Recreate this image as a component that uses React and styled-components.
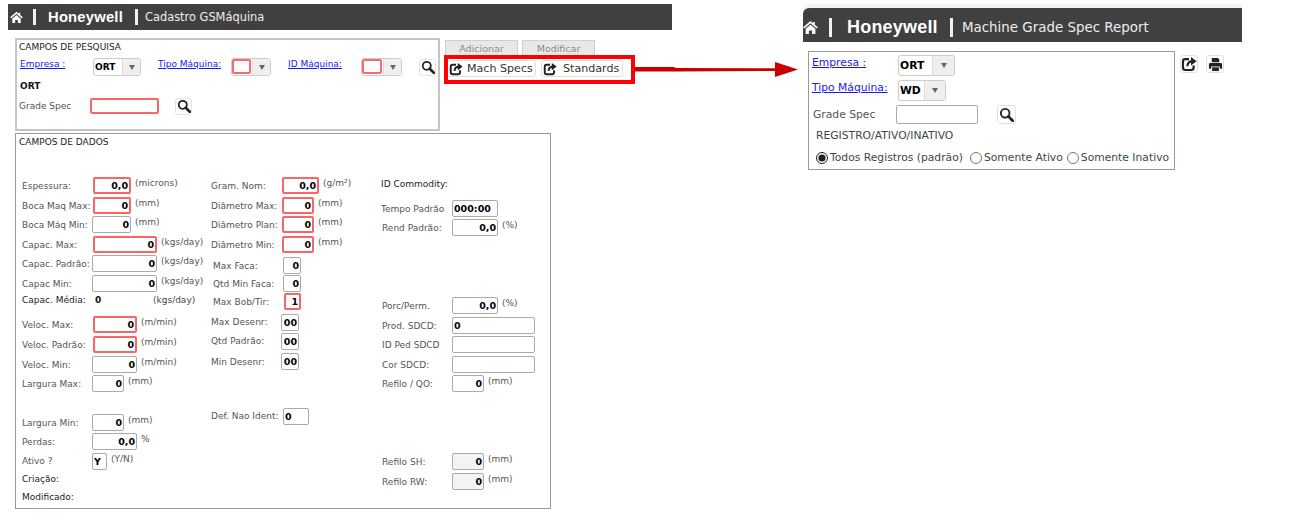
import React from "react";
import styled, { createGlobalStyle } from "styled-components";

const GlobalStyle = createGlobalStyle`
  html, body { margin: 0; padding: 0; background: #fff; }
  body { font-family: "DejaVu Sans", sans-serif; font-size: 9px; color: #444; }
`;

const Page = styled.div`
  position: relative;
  width: 1297px;
  height: 522px;
  overflow: hidden;
  display: flex;
  align-items: flex-start;
`;

const LeftScreen = styled.div`
  width: 672px;
  padding: 4px 0 0 8px;
  box-sizing: border-box;
`;

const RightScreen = styled.div`
  width: 439px;
  margin-left: 131px;
  padding-top: 8px;
  font-size: 10.75px;
`;

const Header = styled.div`
  display: flex;
  align-items: center;
  height: ${(p) => (p.$big ? 34 : 26)}px;
  box-sizing: border-box;
  background: #404040;
  color: #fff;
  padding: ${(p) => (p.$big ? "4px 0 0 0" : "0 0 0 2px")};
  border-top-left-radius: ${(p) => (p.$big ? 6 : 0)}px;
  box-shadow: ${(p) => (p.$big ? "0 -4px 0 #f3f3f3" : "none")};
`;

const Sep = styled.span`
  width: 3px;
  height: ${(p) => (p.$big ? 19 : 16)}px;
  background: #eef3f8;
  flex: none;
  margin-left: ${(p) => p.$ml}px;
  margin-right: ${(p) => p.$mr}px;
`;

const Brand = styled.span`
  font-family: "Liberation Sans", sans-serif;
  font-weight: 700;
  font-size: ${(p) => (p.$big ? 18 : 14.8)}px;
  letter-spacing: 0.2px;
  width: ${(p) => (p.$big ? 103 : 87)}px;
  white-space: nowrap;
`;

const HeaderTitle = styled.span`
  font-size: ${(p) => (p.$big ? 13.4 : 11.4)}px;
  color: #eee;
  white-space: nowrap;
`;

const Body = styled.div`
  display: flex;
  margin: 8px 0 0 7px;
`;

const SearchPanel = styled.div`
  width: 425px;
  height: 93px;
  box-sizing: border-box;
  border: 2px solid #c4c4c4;
  padding: 2px 2px;
  color: #222;
`;

const PanelTitle = styled.div`
  line-height: 11px;
  color: #222;
`;

const SearchRow = styled.div`
  display: flex;
  align-items: center;
  height: 18px;
  margin-top: ${(p) => p.$mt || 0}px;
  padding-left: ${(p) => p.$pl || 0}px;
`;

const FieldLink = styled.a`
  color: #1a1aee;
  text-decoration: underline;
  width: ${(p) => p.$w}px;
  flex: none;
  align-self: flex-start;
  white-space: nowrap;
  line-height: 13px;
  margin-top: ${(p) => p.$mt || 0}px;
`;

const SelectBox = styled.div`
  display: flex;
  width: ${(p) => p.$w}px;
  height: ${(p) => p.$h || 18}px;
  flex: none;
  box-sizing: border-box;
  border: 1px solid #ccc;
  border-radius: 3px;
  background: #fff;
  color: #000;
  font-weight: 700;
  line-height: ${(p) => (p.$h || 18) - 2}px;
  margin-right: ${(p) => p.$mr || 0}px;
`;

const SelectValue = styled.span`
  flex: 1;
  padding-left: 1px;
`;

const RedEmpty = styled.span`
  flex: 1;
  margin: 0 1px 1px 0;
  border: 2px solid #fa6a6a;
  border-radius: 2px;
`;

const SelectArrow = styled.span`
  width: ${(p) => p.$w || 17}px;
  flex: none;
  display: flex;
  align-items: center;
  justify-content: center;
  background: #efefef;
  border-left: 1px solid #ddd;
  border-radius: 0 2px 2px 0;
  &::after {
    content: "";
    border-left: 3px solid transparent;
    border-right: 3px solid transparent;
    border-top: 5px solid #666;
  }
`;

const OrtLine = styled.div`
  font-weight: 700;
  color: #111;
  margin: 5px 0 0 1px;
  line-height: 11px;
`;

const IconButton = styled.button`
  display: flex;
  align-items: center;
  justify-content: center;
  width: ${(p) => p.$s || 17}px;
  height: ${(p) => p.$s || 17}px;
  padding: 0;
  background: #fff;
  border: 1px solid #e2e2e2;
  border-radius: 3px;
  color: #222;
  flex: none;
  margin-left: ${(p) => p.$ml || 0}px;
`;

const Actions = styled.div`
  margin-left: 5px;
  padding-top: 2px;
`;

const Tabs = styled.div`
  display: flex;
  gap: 4px;
`;

const Tab = styled.div`
  width: 73px;
  height: 15px;
  box-sizing: border-box;
  background: #e8e8e8;
  border: 1px solid #d0d0d0;
  border-bottom: none;
  color: #888;
  font-size: 9.5px;
  line-height: 15px;
  text-align: center;
`;

const ButtonsRow = styled.div`
  display: flex;
  gap: 5px;
  margin: 5px 0 0 2px;
`;

const LinkButton = styled.button`
  display: flex;
  align-items: center;
  width: ${(p) => p.$w}px;
  height: 17px;
  padding: 0 0 0 1px;
  background: #fff;
  border: 1px solid #e0e0e0;
  border-radius: 3px;
  color: #333;
  font: 11.1px "DejaVu Sans", sans-serif;
  white-space: nowrap;
  span { margin-left: ${(p) => p.$gap}px; }
`;

const DataPanel = styled.div`
  width: 536px;
  height: 376px;
  margin: 2px 0 0 7px;
  box-sizing: border-box;
  border: 1px solid #999;
  padding: 3px 0 0 3px;
`;

const Columns = styled.div`
  display: grid;
  grid-template-columns: 189px 170px 1fr;
  margin: 29px 0 0 3px;
`;

const Column = styled.div`
  display: flex;
  flex-direction: column;
`;

const Field = styled.div`
  display: flex;
  align-items: center;
  height: 16px;
  margin-top: ${(p) => p.$mt || 0}px;
  white-space: nowrap;
`;

const Label = styled.span`
  width: ${(p) => p.$w || 71}px;
  padding-left: ${(p) => p.$pl || 0}px;
  margin-top: ${(p) => (p.$flat ? 0 : 2)}px;
  box-sizing: border-box;
  flex: none;
  color: ${(p) => (p.$dark ? "#222" : "#555")};
`;

const Input = styled.input`
  width: ${(p) => p.$w}px;
  height: ${(p) => p.$h || 17}px;
  box-sizing: border-box;
  flex: none;
  padding: 0 1px;
  border: ${(p) => (p.$red ? "2px solid #fa6565" : "1px solid #aaa")};
  border-radius: 2px;
  background: ${(p) => (p.$off ? "#f3f3f3" : "#fff")};
  color: #000;
  font: 700 9.5px "DejaVu Sans", sans-serif;
  text-align: ${(p) => p.$align || "right"};
  outline: none;
`;

const Unit = styled.span`
  margin: -5px 0 0 4px;
  color: #555;
`;

const StaticValue = styled.span`
  width: 60px;
  flex: none;
  font-weight: 700;
  color: #111;
  padding-left: 2px;
  box-sizing: border-box;
`;

const ReportPanel = styled.div`
  width: 367px;
  height: 119px;
  margin: 9px 0 0 5px;
  box-sizing: border-box;
  border: 1px solid #999;
  padding: 3px 0 0 3px;
  color: #444;
`;

const ReportWrap = styled.div`
  display: flex;
  align-items: flex-start;
`;

const ReportTools = styled.div`
  display: flex;
  gap: 8px;
  margin: 13px 0 0 5px;
`;

const ReportRow = styled.div`
  display: flex;
  align-items: center;
  margin: ${(p) => p.$mt || 0}px 0 0 ${(p) => p.$ml || 0}px;
`;

const ReportInput = styled.input`
  width: 82px;
  height: 19px;
  box-sizing: border-box;
  border: 1px solid #aaa;
  border-radius: 2px;
  background: #fff;
  outline: none;
`;

const RadioText = styled.label`
  display: flex;
  align-items: center;
  color: #444;
  margin-right: ${(p) => p.$mr || 0}px;
  white-space: nowrap;
`;

const Radio = styled.input`
  width: 12px;
  height: 12px;
  margin: 2px 2px 0 0;
  accent-color: #222;
`;

const Callout = styled.div`
  position: absolute;
  left: 444px;
  top: 55px;
  width: 191px;
  height: 29px;
  box-sizing: border-box;
  border: 4px solid #f00;
`;

const ArrowSvg = styled.svg`
  position: absolute;
  left: 634px;
  top: 60px;
`;

const HomeIcon = ({ size }) => (
  <svg width={size} height={size} viewBox="0 0 16 16" fill="#fff">
    <path d="M8 1L.2 7.8l1.1 1.3L8 3.4l6.7 5.7 1.1-1.3-3.2-2.8V2.2h-2.2v1.2z" />
    <path d="M2.8 9.4L8 5l5.2 4.4v5.4H9.7v-3.6H6.3v3.6H2.8z" />
  </svg>
);

const SearchIcon = ({ size = 13 }) => (
  <svg width={size} height={size} viewBox="0 0 16 16" fill="none" stroke="#222">
    <circle cx="6.6" cy="6.6" r="4.6" strokeWidth="2" />
    <path d="M10 10l4.6 4.6" strokeWidth="3" strokeLinecap="round" />
  </svg>
);

const ShareIcon = ({ size = 14 }) => (
  <svg width={size} height={size} viewBox="0 0 16 16" fill="none" stroke="#222">
    <path d="M8 3.2H4.2Q2 3.2 2 5.4v6.2Q2 14 4.2 14h6.2q2.2 0 2.2-2.2V9.4" strokeWidth="2.2" />
    <path d="M6.4 10.2C6.6 7 8.6 5.4 11 5.4" strokeWidth="2.2" />
    <path d="M10 1l5.6 4.2L10 9.6z" fill="#222" stroke="none" />
  </svg>
);

const PrintIcon = ({ size = 16 }) => (
  <svg width={size} height={size} viewBox="0 0 16 16" fill="#222">
    <path d="M4 1h6.5L12 2.5V5.6H4z" />
    <path d="M2.4 6.5h11.2Q15 6.5 15 8v4.4h-2.4V10H3.4v2.4H1V8q0-1.5 1.4-1.5z" />
    <path d="M4.4 11h7.2v4H4.4z" />
  </svg>
);

const col1 = [
  { label: "Espessura:", w: 38, value: "0,0", red: true, unit: "(microns)" },
  { mt: 4, label: "Boca Maq Max:", w: 38, value: "0", red: true, unit: "(mm)" },
  { mt: 3, label: "Boca Máq Min:", lw: 70, w: 39, value: "0", unit: "(mm)" },
  { mt: 4, label: "Capac. Max:", w: 64, value: "0", red: true, unit: "(kgs/day)" },
  { mt: 3, label: "Capac. Padrão:", lw: 70, w: 65, value: "0", unit: "(kgs/day)" },
  { mt: 4, label: "Capac Min:", lw: 70, w: 65, value: "0", unit: "(kgs/day)" },
  { mt: 1, static: true, label: "Capac. Média:", value: "0", unit: "(kgs/day)" },
  { mt: 8, label: "Veloc. Max:", w: 44, value: "0", red: true, unit: "(m/min)" },
  { mt: 4, label: "Veloc. Padrão:", w: 44, value: "0", red: true, unit: "(m/min)" },
  { mt: 4, label: "Veloc. Min:", lw: 70, w: 45, value: "0", unit: "(m/min)" },
  { mt: 3, label: "Largura Max:", lw: 70, w: 32, value: "0", unit: "(mm)" },
  { mt: 23, label: "Largura Min:", lw: 70, w: 32, value: "0", unit: "(mm)" },
  { mt: 3, label: "Perdas:", lw: 70, w: 45, value: "0,0", unit: "%" },
  { mt: 4, label: "Ativo ?", flat: true, lw: 70, w: 15, value: "Y", align: "left", unit: "(Y/N)" },
  { mt: 2, label: "Criação:", dark: true },
  { mt: 2, label: "Modificado:", dark: true },
];

const col2 = [
  { label: "Gram. Nom:", w: 37, value: "0,0", red: true, unit: "(g/m²)" },
  { mt: 4, label: "Diâmetro Max:", w: 32, value: "0", red: true, unit: "(mm)" },
  { mt: 3, label: "Diâmetro Plan:", w: 32, value: "0", red: true, unit: "(mm)" },
  { mt: 4, label: "Diâmetro Min:", w: 32, value: "0", red: true, unit: "(mm)" },
  { mt: 5, label: "Max Faca:", pl: 2, lw: 72, w: 18, value: "0" },
  { mt: 2, label: "Qtd Min Faca:", pl: 2, lw: 72, w: 18, value: "0" },
  { mt: 2, label: "Max Bob/Tir:", pl: 2, lw: 73, w: 17, value: "1", red: true },
  { mt: 5, label: "Max Desenr:", flat: true, lw: 70, w: 18, value: "00" },
  { mt: 3, label: "Qtd Padrão:", flat: true, lw: 70, w: 18, value: "00" },
  { mt: 4, label: "Min Desenr:", lw: 70, w: 18, value: "00" },
  { mt: 39, label: "Def. Nao Ident:", flat: true, lw: 72, w: 26, value: "0", align: "left" },
];

const col3 = [
  { mt: -1, label: "ID Commodity:", dark: true, lw: 100 },
  { mt: 8, label: "Tempo Padrão", w: 46, value: "000:00", align: "left" },
  { mt: 3, label: "Rend Padrão:", pl: 1, w: 46, value: "0,0", unit: "(%)" },
  { mt: 62, label: "Porc/Perm.", pl: 1, w: 46, value: "0,0", unit: "(%)" },
  { mt: 4, label: "Prod. SDCD:", pl: 1, w: 83, value: "0", align: "left" },
  { mt: 3, label: "ID Ped SDCD", pl: 1, w: 83, value: "" },
  { mt: 4, label: "Cor SDCD:", pl: 1, w: 83, value: "" },
  { mt: 3, label: "Refilo / QO:", pl: 1, w: 32, value: "0", unit: "(mm)" },
  { mt: 62, label: "Refilo SH:", pl: 1, w: 32, value: "0", off: true, unit: "(mm)" },
  { mt: 4, label: "Refilo RW:", pl: 1, w: 32, value: "0", off: true, unit: "(mm)" },
];

const renderField = (f) => (
  <Field key={f.label} $mt={f.mt}>
    <Label
      $w={f.lw}
      $pl={f.pl}
      $dark={f.dark || f.static}
      $flat={f.flat || f.dark || f.static}
    >
      {f.label}
    </Label>
    {f.static && <StaticValue>{f.value}</StaticValue>}
    {f.w && (
      <Input
        readOnly
        value={f.value}
        $w={f.w}
        $red={f.red}
        $off={f.off}
        $align={f.align}
      />
    )}
    {f.unit && (f.static ? <span>{f.unit}</span> : <Unit>{f.unit}</Unit>)}
  </Field>
);

const App = () => (
  <Page>
    <GlobalStyle />
    <LeftScreen>
      <Header>
        <HomeIcon size={13} />
        <Sep $ml={10} $mr={12} />
        <Brand>Honeywell</Brand>
        <Sep $ml={0} $mr={7} />
        <HeaderTitle>Cadastro GSMáquina</HeaderTitle>
      </Header>
      <Body>
        <SearchPanel>
          <PanelTitle>CAMPOS DE PESQUISA</PanelTitle>
          <SearchRow $mt={5} $pl={1}>
            <FieldLink $w={73}>Empresa :</FieldLink>
            <SelectBox $w={48} $mr={17}>
              <SelectValue>ORT</SelectValue>
              <SelectArrow />
            </SelectBox>
            <FieldLink $w={73}>Tipo Máquina:</FieldLink>
            <SelectBox $w={40} $mr={17}>
              <RedEmpty />
              <SelectArrow />
            </SelectBox>
            <FieldLink $w={73}>ID Máquina:</FieldLink>
            <SelectBox $w={41}>
              <RedEmpty />
              <SelectArrow />
            </SelectBox>
            <IconButton $ml={17}>
              <SearchIcon size={14} />
            </IconButton>
          </SearchRow>
          <OrtLine>ORT</OrtLine>
          <SearchRow $mt={5}>
            <Label $w={71} $flat>Grade Spec</Label>
            <Input $w={69} $h={16} $red readOnly value="" />
            <IconButton $ml={16}>
              <SearchIcon size={14} />
            </IconButton>
          </SearchRow>
        </SearchPanel>
        <Actions>
          <Tabs>
            <Tab>Adicionar</Tab>
            <Tab>Modificar</Tab>
          </Tabs>
          <ButtonsRow>
            <LinkButton $w={89} $gap={4}>
              <ShareIcon />
              <span>Mach Specs</span>
            </LinkButton>
            <LinkButton $w={82} $gap={6}>
              <ShareIcon />
              <span>Standards</span>
            </LinkButton>
          </ButtonsRow>
        </Actions>
      </Body>
      <DataPanel>
        <PanelTitle>CAMPOS DE DADOS</PanelTitle>
        <Columns>
          <Column>{col1.map(renderField)}</Column>
          <Column>{col2.map(renderField)}</Column>
          <Column>{col3.map(renderField)}</Column>
        </Columns>
      </DataPanel>
    </LeftScreen>
    <RightScreen>
      <Header $big>
        <HomeIcon size={15} />
        <Sep $big $ml={11} $mr={15} />
        <Brand $big>Honeywell</Brand>
        <Sep $big $ml={0} $mr={9} />
        <HeaderTitle $big>Machine Grade Spec Report</HeaderTitle>
      </Header>
      <ReportWrap>
        <ReportPanel>
          <ReportRow>
            <FieldLink $w={86} $mt={1}>Empresa :</FieldLink>
            <SelectBox $w={57} $h={21}>
              <SelectValue>ORT</SelectValue>
              <SelectArrow $w={21} />
            </SelectBox>
          </ReportRow>
          <ReportRow $mt={4}>
            <FieldLink $w={86} $mt={1}>Tipo Máquina:</FieldLink>
            <SelectBox $w={48} $h={21}>
              <SelectValue>WD</SelectValue>
              <SelectArrow $w={20} />
            </SelectBox>
          </ReportRow>
          <ReportRow $mt={4} $ml={1}>
            <Label $w={83} $flat>Grade Spec</Label>
            <ReportInput readOnly />
            <IconButton $s={19} $ml={19}>
              <SearchIcon size={15} />
            </IconButton>
          </ReportRow>
          <ReportRow $mt={5} $ml={4}>REGISTRO/ATIVO/INATIVO</ReportRow>
          <ReportRow $mt={8} $ml={4}>
            <RadioText $mr={7}>
              <Radio type="radio" name="registro" defaultChecked />
              Todos Registros (padrão)
            </RadioText>
            <RadioText $mr={4}>
              <Radio type="radio" name="registro" />
              Somente Ativo
            </RadioText>
            <RadioText>
              <Radio type="radio" name="registro" />
              Somente Inativo
            </RadioText>
          </ReportRow>
        </ReportPanel>
        <ReportTools>
          <IconButton $s={18}>
            <ShareIcon size={16} />
          </IconButton>
          <IconButton $s={18}>
            <PrintIcon size={15} />
          </IconButton>
        </ReportTools>
      </ReportWrap>
    </RightScreen>
    <Callout />
    <ArrowSvg width="166" height="20" viewBox="0 0 166 20">
      <path d="M0 7h40l2 1 99 .2V2l23 7.5-23 7.5v-6L42 11.4 0 11.6z" fill="#c80000" />
    </ArrowSvg>
  </Page>
);

export default App;
